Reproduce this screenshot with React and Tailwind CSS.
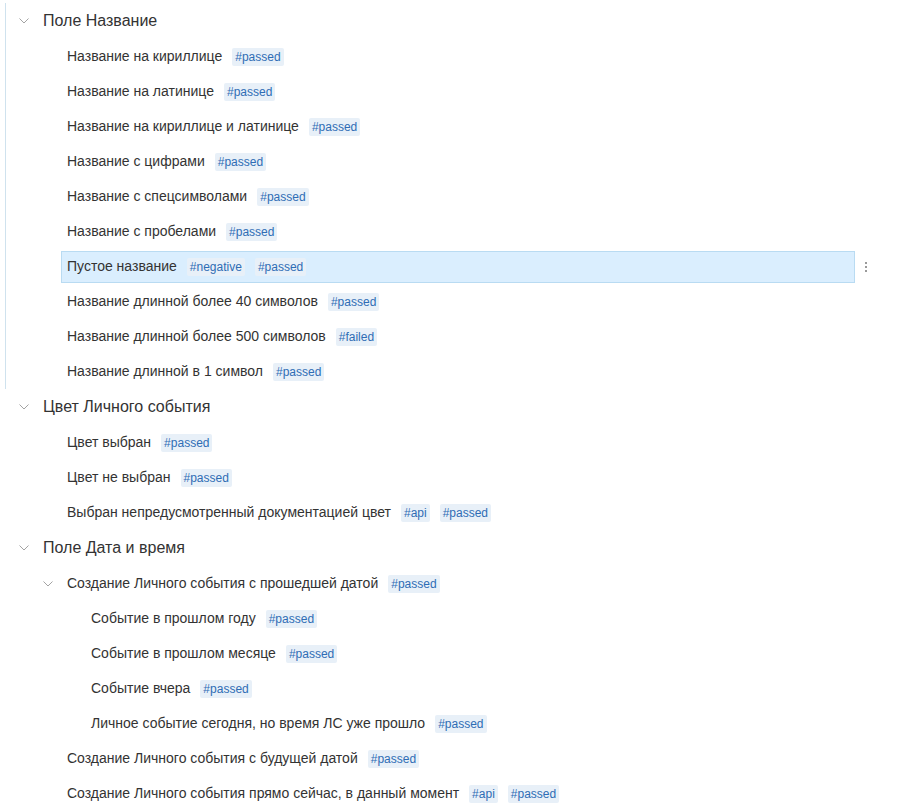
import React from 'react';

const tree = [
  {
    title: 'Поле Название',
    line: true,
    children: [
      { title: 'Название на кириллице', tags: ['passed'] },
      { title: 'Название на латинице', tags: ['passed'] },
      { title: 'Название на кириллице и латинице', tags: ['passed'] },
      { title: 'Название с цифрами', tags: ['passed'] },
      { title: 'Название с спецсимволами', tags: ['passed'] },
      { title: 'Название с пробелами', tags: ['passed'] },
      { title: 'Пустое название', tags: ['negative', 'passed'], selected: true },
      { title: 'Название длинной более 40 символов', tags: ['passed'] },
      { title: 'Название длинной более 500 символов', tags: ['failed'] },
      { title: 'Название длинной в 1 символ', tags: ['passed'] },
    ],
  },
  {
    title: 'Цвет Личного события',
    children: [
      { title: 'Цвет выбран', tags: ['passed'] },
      { title: 'Цвет не выбран', tags: ['passed'] },
      { title: 'Выбран непредусмотренный документацией цвет', tags: ['api', 'passed'] },
    ],
  },
  {
    title: 'Поле Дата и время',
    children: [
      {
        title: 'Создание Личного события с прошедшей датой',
        tags: ['passed'],
        children: [
          { title: 'Событие в прошлом году', tags: ['passed'] },
          { title: 'Событие в прошлом месяце', tags: ['passed'] },
          { title: 'Событие вчера', tags: ['passed'] },
          { title: 'Личное событие сегодня, но время ЛС уже прошло', tags: ['passed'] },
        ],
      },
      { title: 'Создание Личного события с будущей датой', tags: ['passed'] },
      { title: 'Создание Личного события прямо сейчас, в данный момент', tags: ['api', 'passed'] },
    ],
  },
];

const Chevron = () => (
  <svg width="10" height="6" viewBox="0 0 10 6" className="shrink-0">
    <polyline points="0.5,0.5 5,5 9.5,0.5" fill="none" stroke="#a3a3a3" strokeWidth="1" />
  </svg>
);

const Tag = ({ name }) => (
  <span className="ml-[10px] rounded-[2px] bg-[#e8f0f8] px-[3px] text-[12px] leading-[18px] text-[#2f6db5]">
    #{name}
  </span>
);

const Leaf = ({ item, offset }) => (
  <div className="relative flex h-[35px] items-center">
    <div
      className={
        'flex h-[32px] w-full items-center border px-[5px] ' +
        (item.selected ? 'border-[#b9dbf2] bg-[#daeefe]' : 'border-transparent')
      }
      style={{ marginLeft: offset, marginRight: 68 }}
    >
      <span className="text-[14px] text-[#333]">{item.title}</span>
      {item.tags.map((t) => (
        <Tag key={t} name={t} />
      ))}
    </div>
    {item.selected && (
      <div className="absolute right-[56px] top-[13px] flex flex-col gap-[2px]">
        <span className="h-[2px] w-[2px] bg-[#9a9a9a]" />
        <span className="h-[2px] w-[2px] bg-[#9a9a9a]" />
        <span className="h-[2px] w-[2px] bg-[#9a9a9a]" />
      </div>
    )}
  </div>
);

const SubGroup = ({ item }) => (
  <div>
    <div className="flex h-[35px] items-center pl-[37px]">
      <Chevron />
      <span className="ml-[14px] text-[14px] text-[#333]">{item.title}</span>
      {item.tags.map((t) => (
        <Tag key={t} name={t} />
      ))}
    </div>
    {item.children.map((c) => (
      <Leaf key={c.title} item={c} offset={79} />
    ))}
  </div>
);

export default function App() {
  return (
    <div className="min-h-[811px] bg-white pt-[3px] font-['Liberation_Sans',Arial,sans-serif]">
      {tree.map((g) => (
        <div
          key={g.title}
          className={'ml-[5px] border-l ' + (g.line ? 'border-[#cfe2ee]' : 'border-transparent')}
        >
          <div className="flex h-[36px] items-center pl-[13px]">
            <Chevron />
            <span className="ml-[14px] text-[16px] text-[#333]">{g.title}</span>
          </div>
          {g.children.map((c) =>
            c.children ? <SubGroup key={c.title} item={c} /> : <Leaf key={c.title} item={c} offset={55} />
          )}
        </div>
      ))}
    </div>
  );
}
